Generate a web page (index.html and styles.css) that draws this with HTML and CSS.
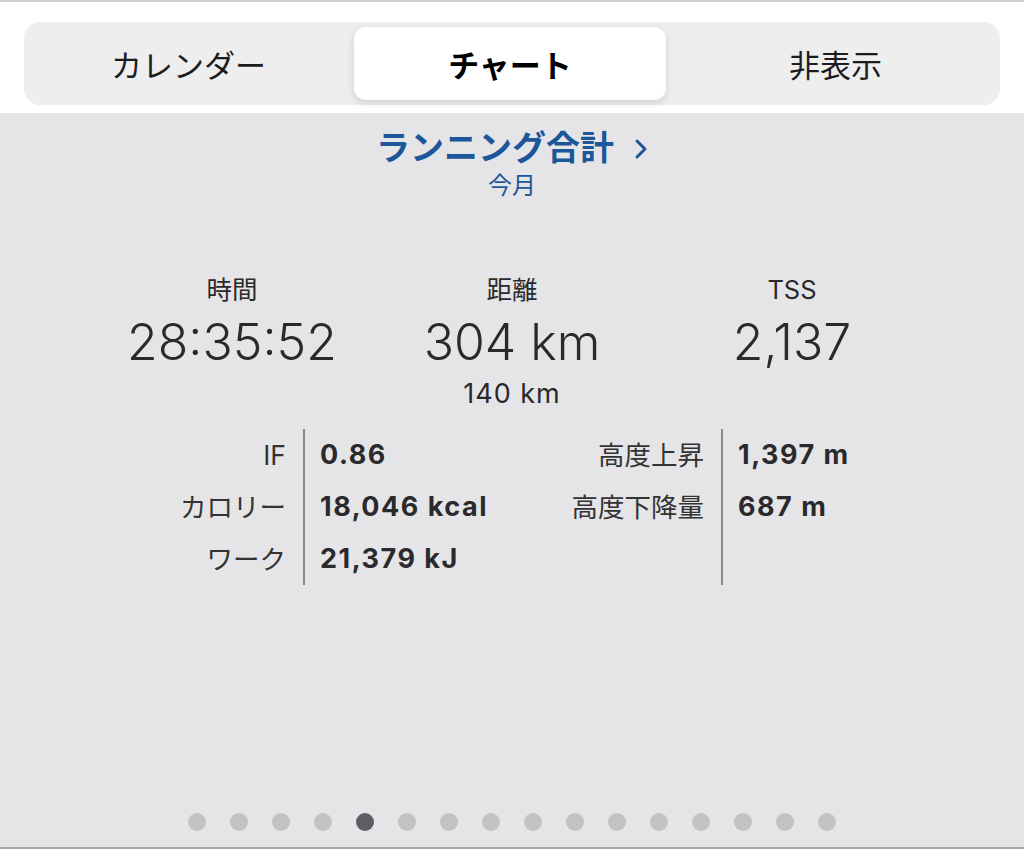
FILE: index.html
```html
<!DOCTYPE html>
<html lang="ja">
<head>
    <meta charset="UTF-8">
    <title>ランニング合計</title>
    <link rel="stylesheet" href="styles.css">
</head>
<body>
    <div class="header">
        <div class="segments">
            <div class="seg">カレンダー</div>
            <div class="seg active">チャート</div>
            <div class="seg">非表示</div>
        </div>
    </div>
    <div class="content">
        <div class="title">ランニング合計
            <svg class="chev" width="14" height="22" viewBox="0 0 14 22"><path d="M3 3 L11 11 L3 19" fill="none" stroke="#1b5799" stroke-width="3" stroke-linecap="round" stroke-linejoin="round"/></svg>
        </div>
        <div class="period">今月</div>

        <div class="summary">
            <div class="stat">
                <div class="label">時間</div>
                <div class="value">28:35:52</div>
            </div>
            <div class="stat">
                <div class="label">距離</div>
                <div class="value">304 km</div>
                <div class="sub">140 km</div>
            </div>
            <div class="stat">
                <div class="label">TSS</div>
                <div class="value">2,137</div>
            </div>
        </div>

        <div class="details">
            <div class="names first">
                <div>IF</div>
                <div>カロリー</div>
                <div>ワーク</div>
            </div>
            <div class="nums first">
                <div>0.86</div>
                <div>18,046 kcal</div>
                <div>21,379 kJ</div>
            </div>
            <div class="names second">
                <div>高度上昇</div>
                <div>高度下降量</div>
            </div>
            <div class="nums second">
                <div>1,397 m</div>
                <div>687 m</div>
            </div>
        </div>

        <div class="dots">
            <span></span><span></span><span></span><span></span>
            <span class="on"></span><span></span><span></span><span></span>
            <span></span><span></span><span></span><span></span>
            <span></span><span></span><span></span><span></span>
        </div>
    </div>
</body>
</html>
```

FILE: styles.css
```css
html, body {
    margin: 0;
    height: 100%;
}

body {
    font-family: Inter, "Noto Sans CJK JP", sans-serif;
    color: #222;
    display: flex;
    flex-direction: column;
    border-top: 2px solid #cfcfd1;
    border-bottom: 2px solid #a9a9ab;
    box-sizing: border-box;
}

.header {
    background: #fff;
    padding: 20px 24px 8px;
}

.segments {
    display: flex;
    height: 83px;
    background: #eeeeef;
    border-radius: 16px;
    padding: 5px;
    box-sizing: border-box;
}

.seg {
    flex: 1;
    display: flex;
    align-items: center;
    justify-content: center;
    font-size: 31px;
    color: #1c1c1e;
    border-radius: 12px;
}

.seg.active {
    flex: 0 0 312px;
    margin: 0 10px 0 6px;
    background: #fff;
    font-weight: bold;
    color: #000;
    box-shadow: 0 3px 8px rgba(0, 0, 0, 0.12);
}

.content {
    flex: 1;
    background: #e5e5e8;
    display: flex;
    flex-direction: column;
    align-items: center;
}

.title {
    margin-top: 14px;
    font-size: 34px;
    font-weight: bold;
    color: #1b5799;
    line-height: 42px;
    display: flex;
    align-items: center;
}

.chev {
    margin-left: 20px;
    margin-top: 2px;
}

.period {
    font-size: 24px;
    color: #1b5799;
    line-height: 34px;
}

.summary {
    display: flex;
    margin-top: 71px;
}

.stat {
    width: 280px;
    text-align: center;
}

.label {
    font-size: 25.5px;
    line-height: 32px;
    color: #2a2a2c;
}

.value {
    font-size: 50px;
    font-weight: 300;
    line-height: 72px;
    color: #2a2a2c;
}

.sub {
    font-size: 27px;
    letter-spacing: 1px;
    line-height: 32px;
    color: #2a2a2c;
}

.details {
    display: flex;
    align-self: flex-start;
    margin: 19px 0 0 106px;
}

.names,
.nums {
    box-sizing: border-box;
}

.names div,
.nums div {
    line-height: 52px;
}

.names {
    text-align: right;
    padding-right: 17px;
    border-right: 2px solid #8a8a8c;
    font-size: 26.5px;
    color: #333;
}

.names.first {
    width: 199px;
}

.names.second {
    width: 218px;
}

.nums {
    padding-left: 15px;
    font-size: 27px;
    letter-spacing: 1.5px;
    font-weight: bold;
    color: #2a2a2c;
}

.nums.first {
    width: 200px;
}

.nums.second {
    width: 180px;
}

.dots {
    margin-top: auto;
    margin-bottom: 16px;
    display: flex;
    gap: 24px;
}

.dots span {
    width: 18px;
    height: 18px;
    border-radius: 50%;
    background: #c3c3c5;
}

.dots .on {
    background: #5d5e63;
}
```
